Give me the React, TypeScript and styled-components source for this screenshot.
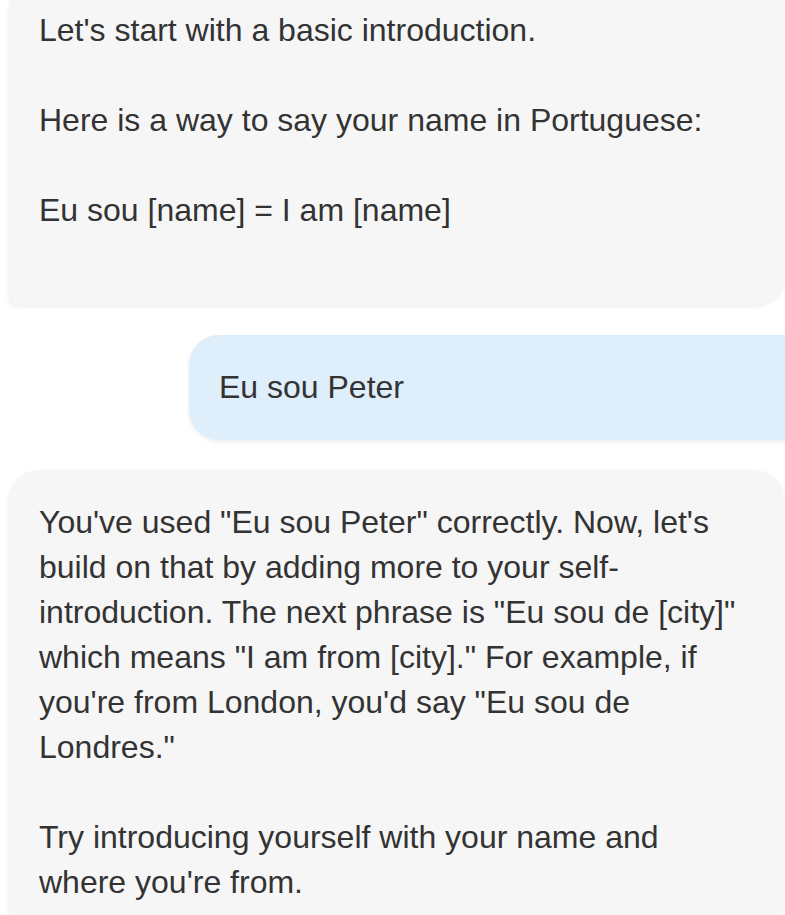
import React from "react";
import styled, { createGlobalStyle } from "styled-components";

const Global = createGlobalStyle`
  html, body {
    margin: 0;
    padding: 0;
    background: #ffffff;
    overflow: hidden;
  }
  body {
    font-family: "Liberation Sans", Arial, sans-serif;
  }
`;

const Thread = styled.div`
  display: flex;
  flex-direction: column;
  gap: 30px;
  padding: 0 1px 40px 9px;
  margin-top: -22px;
`;

const Bubble = styled.div<{ $from: "bot" | "user"; $tail?: number }>`
  box-sizing: border-box;
  padding: 30px 30px ${({ $tail = 0 }) => 30 + $tail}px 30px;
  font-size: 32px;
  line-height: 45px;
  color: #333333;
  white-space: pre-wrap;
  box-shadow: 0 2px 4px rgba(0, 0, 0, 0.07);
  ${({ $from }) =>
    $from === "bot"
      ? `
    background: #f6f6f6;
    border-radius: 30px 30px 30px 8px;
  `
      : `
    margin-left: 180px;
    margin-right: -40px;
    background: #dfeefb;
    border-radius: 30px 30px 8px 30px;
  `}
`;

const messages: { from: "bot" | "user"; text: string; tail?: number }[] = [
  {
    from: "bot",
    text:
      "Let's start with a basic introduction.\n\nHere is a way to say your name in Portuguese:\n\nEu sou [name] = I am [name]",
    tail: 42,
  },
  { from: "user", text: "Eu sou Peter" },
  {
    from: "bot",
    text:
      "You've used \"Eu sou Peter\" correctly. Now, let's build on that by adding more to your self-introduction. The next phrase is \"Eu sou de [city]\" which means \"I am from [city].\" For example, if you're from London, you'd say \"Eu sou de Londres.\"\n\nTry introducing yourself with your name and where you're from.",
  },
];

export default function App() {
  return (
    <>
      <Global />
      <Thread>
        {messages.map((m, i) => (
          <Bubble key={i} $from={m.from} $tail={m.tail}>
            {m.text}
          </Bubble>
        ))}
      </Thread>
    </>
  );
}
